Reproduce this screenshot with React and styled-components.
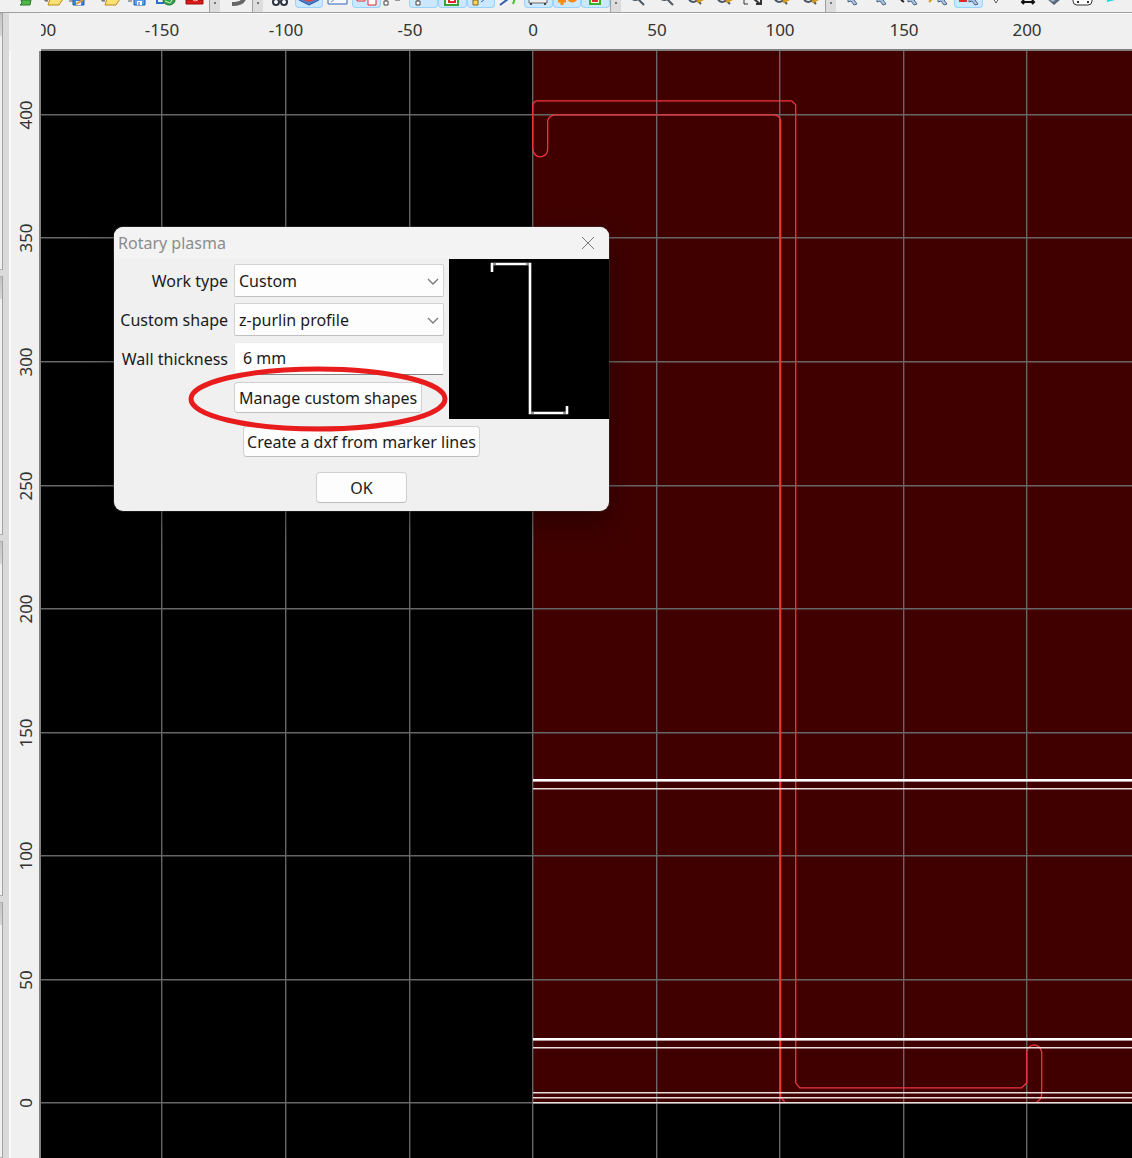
import React from "react";
import styled, { createGlobalStyle } from "styled-components";

const range = (from, to, step) => {
  const out = [];
  for (let v = from; v <= to; v += step) out.push(v);
  return out;
};

// drawing units: 50 mm are 123.5 px on screen
const SCALE = 2.47;
const ORIGIN = { x: 492, y: 1052 };
const X_TICKS = range(-200, 1500, 50);
const Y_TICKS = range(-500, 400, 50);
const toX = (mm) => Math.round(ORIGIN.x + mm * SCALE);
const toY = (mm) => Math.round(ORIGIN.y - mm * SCALE);

const icons = {
  newFile: <path d="M9 0h10l-1 5H8l2-2z" fill="#4cb648" stroke="#2c7a2c" />,
  folder: (
    <>
      <path d="M4 0h4M5 1h3" stroke="#555" />
      <path d="M8 5l2-6h13l-4 6z" fill="#fbe074" stroke="#b98a1c" />
    </>
  ),
  saveEdit: (
    <>
      <path d="M1 1h4" stroke="#555" />
      <path d="M5 0v5h11V0" fill="#3d84e0" stroke="#1f5db4" />
      <path d="M8 5V1h5v4z" fill="#eef" />
      <path d="M8 4l7-4" stroke="#e0982a" strokeWidth="2" />
    </>
  ),
  save: (
    <>
      <path d="M3 1h4" stroke="#555" />
      <path d="M9 0v5h11V0" fill="#5b9cec" stroke="#1f5db4" />
      <path d="M12 5V1h5v4z" fill="#fff" />
      <path d="M14 2v3" stroke="#1f5db4" />
    </>
  ),
  exportFile: (
    <>
      <path d="M4 0v3h7" fill="none" stroke="#2d6bd0" strokeWidth="2" />
      <ellipse cx="16" cy="0" rx="6" ry="5" fill="#36a24a" stroke="#1c6e2c" />
      <path d="M12 1l5 2 2-3" fill="none" stroke="#c9f0c4" />
    </>
  ),
  red: (
    <>
      <path d="M5 0h17v4H5z" fill="#dc1717" stroke="#9d0e0e" />
      <path d="M12 0l2 1 3-1" stroke="#ffb5b5" fill="none" />
    </>
  ),
  curl: <path d="M8 4q10 0 12-5" fill="none" stroke="#666" strokeWidth="4" />,
  binoculars: (
    <>
      <circle cx="10" cy="2" r="3" fill="#fff" stroke="#2b3440" strokeWidth="2" />
      <circle cx="18" cy="2" r="3" fill="#fff" stroke="#2b3440" strokeWidth="2" />
    </>
  ),
  layers: (
    <>
      <path d="M4 0l10 5 10-5" fill="#4f7fca" stroke="#2454a8" />
      <path d="M8 0l6 2 6-2z" fill="#d84a4a" />
    </>
  ),
  rect: (
    <>
      <path d="M4-3h19v7H4z" fill="#f4f8ff" stroke="#3563b8" />
      <path d="M7 2l4-3" stroke="#888" />
    </>
  ),
  squares: (
    <>
      <path d="M5-5h8v6H5z" fill="#fff" stroke="#e02a2a" />
      <path d="M16-3h8v8h-8z" fill="#fff" stroke="#e02a2a" />
    </>
  ),
  nodes: (
    <>
      <path d="M3 1h4v4H3z" fill="#fff" stroke="#444" />
      <path d="M5 0v1M14 0h5" stroke="#444" />
    </>
  ),
  node: (
    <>
      <path d="M6 1h4v4H6z" fill="#fff" stroke="#444" />
      <path d="M8 0v1" stroke="#444" />
    </>
  ),
  nested: (
    <>
      <path d="M7-6h13v11H7z" fill="#fff" stroke="#35a435" strokeWidth="2" />
      <path d="M11-4h6v6h-6z" fill="#fff" stroke="#e02a2a" strokeWidth="2" />
    </>
  ),
  snap: (
    <>
      <path d="M6 0h5v5H6z" fill="#fbd75b" stroke="#7a6420" />
      <path d="M14 2l4-3" stroke="#3563b8" />
    </>
  ),
  lines: (
    <>
      <path d="M4 5l8-6" stroke="#2f5fae" strokeWidth="2" />
      <path d="M17 4l2-6" stroke="#42c02c" strokeWidth="2" />
    </>
  ),
  machine: (
    <>
      <path d="M5 0v3h18V0" fill="#eee" stroke="#666" />
      <path d="M7 3v2M21 3v2" stroke="#444" strokeWidth="2" />
    </>
  ),
  orange: <path d="M5 1h8M9-2v7M15-2q4 6 9 0" fill="none" stroke="#f58a14" strokeWidth="3" />,
  greenSquare: (
    <>
      <path d="M8-6h10v10H8z" fill="#fff" stroke="#36b12c" strokeWidth="2" />
      <path d="M11-3h4v4h-4z" fill="#fff" stroke="#e02a2a" strokeWidth="2" />
    </>
  ),
  zoom: <path d="M8-1q4 2 6 0l6 6" fill="none" stroke="#4b5765" strokeWidth="2" />,
  zoomGold: (
    <>
      <path d="M7 0q5 4 8 0l4 4" fill="none" stroke="#4b5765" strokeWidth="2" />
      <path d="M15 2l6-3" stroke="#d49a1c" strokeWidth="3" />
    </>
  ),
  extents: (
    <>
      <path d="M5 0v4h4" fill="none" stroke="#333" />
      <path d="M15-1l6 5M22 0v4h-5" fill="none" stroke="#333" strokeWidth="2" />
    </>
  ),
  cursor: (
    <path d="M9-3v5l3-1 3 4 3-1-3-4 3-1z" fill="#a9c3e2" stroke="#4b6583" />
  ),
  cursorDot: (
    <>
      <path d="M4 0l3 2" stroke="#222" strokeWidth="2" />
      <path d="M11-3v5l3-1 3 4 3-1-3-4 3-1z" fill="#a9c3e2" stroke="#4b6583" />
    </>
  ),
  cursorGold: (
    <>
      <path d="M4 2l3-3" stroke="#d99a1c" strokeWidth="2" />
      <path d="M13-3v5l3-1 3 4 3-1-3-4 3-1z" fill="#a9c3e2" stroke="#4b6583" />
    </>
  ),
  cursorRed: (
    <>
      <path d="M6-4h6v5H6z" fill="#fff" stroke="#e02a2a" strokeWidth="2" />
      <path d="M15-3v5l3-1 3 4 3-1-3-4 3-1z" fill="#a9c3e2" stroke="#4b6583" />
    </>
  ),
  down: <path d="M10-2l3 5 3-5" fill="#fff" stroke="#555" />,
  width: <path d="M10 2h12M12 0l-2 2 2 2M20 0l2 2-2 2" fill="none" stroke="#111" strokeWidth="2" />,
  solid: (
    <>
      <path d="M7-1l7 6 7-6z" fill="#55677a" />
      <path d="M8-1l5 3 4-3" fill="#9fb2c4" />
    </>
  ),
  track: (
    <>
      <rect x="4" y="-6" width="19" height="11" rx="4" fill="#fff" stroke="#333" />
      <path d="M8 1h2v2H8zM18 1h2v2h-2z" fill="#333" />
    </>
  ),
  flag: <path d="M9-2v4l8-2V-2z" fill="#14d8e0" />,
};

const toolGroups = [
  { width: 197, tools: ["newFile", "folder", "saveEdit", "folder", "save", "exportFile", "red"] },
  { width: 29, tools: ["curl"] },
  {
    width: 344,
    tools: ["binoculars", "layers*", "rect", "squares*", "nodes", "node*", "nested*", "snap*", "lines", "machine*", "orange*", "greenSquare*"],
  },
  { width: 201, tools: ["zoom", "zoom", "zoomGold", "zoomGold", "extents", "zoomGold", "zoomGold"] },
  {
    width: 287,
    tools: ["cursor", "cursor", "cursorDot", "cursorGold", "cursorRed*", "down", "width", "solid", "track", "flag"],
  },
];

function Toolbar() {
  return (
    <ToolbarRow role="toolbar" aria-label="Tools">
      {toolGroups.map((group, i) => (
        <React.Fragment key={i}>
          {i > 0 && <Handle />}
          <ToolGroup $width={group.width}>
            {group.tools.map((tool, j) => {
              const name = tool.replace("*", "");
              return (
                <ToolButton key={j} type="button" aria-label={name} $active={tool.endsWith("*")}>
                  <svg width="28" height="7" viewBox="0 0 28 7">
                    {icons[name]}
                  </svg>
                </ToolButton>
              );
            })}
          </ToolGroup>
        </React.Fragment>
      ))}
    </ToolbarRow>
  );
}

function Drawing() {
  const left = ORIGIN.x;
  return (
    <Plot aria-label="Drawing area">
      <rect x={left} y="0" width="4000" height={ORIGIN.y} fill="#400000" />
      <g stroke="#666" strokeWidth="1.4">
        {X_TICKS.map((mm) => (
          <line key={mm} x1={toX(mm) - 0.3} x2={toX(mm) - 0.3} y1="0" y2="3000" />
        ))}
        {Y_TICKS.map((mm) => (
          <line key={mm} x1="0" x2="4492" y1={toY(mm) - 0.3} y2={toY(mm) - 0.3} />
        ))}
      </g>
      <path
        d="M492 56v42q1 8 8 8q7-1 7-8V70q1-5 7-6H734q5 1 6 6V1047l4 4M996 1051q5-2 5-8V1001q-2-7-8-7q-6 1-7 7V1032l-5 5H759l-4-5V54l-4-4H496q-4 1-4 6"
        fill="none"
        stroke="#f0343c"
        strokeWidth="1.3"
        transform="translate(-0.3 -0.2)"
      />
      <g fill="#fff">
        <rect x={left} y="728" width="4000" height="2.6" />
        <rect x={left} y="987" width="4000" height="2.6" />
      </g>
      <g fill="#e8dcdc">
        {[737, 996, 1041, 1046, 1051].map((y) => (
          <rect key={y} x={left} y={y} width="4000" height="1.5" />
        ))}
      </g>
    </Plot>
  );
}

function RotaryDialog() {
  return (
    <Dialog role="dialog" aria-labelledby="dialog-title">
      <TitleBar>
        <Title id="dialog-title">Rotary plasma</Title>
        <CloseButton type="button" aria-label="Close">
          <svg width="14" height="14" viewBox="0 0 14 14">
            <path d="M1 1l12 12M13 1L1 13" stroke="#777" />
          </svg>
        </CloseButton>
      </TitleBar>
      <DialogBody>
        <Form>
          <Label htmlFor="work-type">Work type</Label>
          <SelectWrap>
            <Select id="work-type" defaultValue="Custom">
              <option>Custom</option>
            </Select>
            <Chevron />
          </SelectWrap>
          <Label htmlFor="custom-shape">Custom shape</Label>
          <SelectWrap>
            <Select id="custom-shape" defaultValue="z-purlin profile">
              <option>z-purlin profile</option>
            </Select>
            <Chevron />
          </SelectWrap>
          <Label htmlFor="wall">Wall thickness</Label>
          <Input id="wall" defaultValue="6 mm" />
          <ManageButton type="button">Manage custom shapes</ManageButton>
        </Form>
        <Preview>
          <svg width="160" height="160" viewBox="0 0 160 160">
            <path d="M43 13V5H81V154H118V147" fill="none" stroke="#fff" strokeWidth="2.6" />
            <path d="M44 5h3M77 5h3M82 154h3M114 154h3" stroke="#333" />
          </svg>
        </Preview>
      </DialogBody>
      <Footer>
        <Button type="button">Create a dxf from marker lines</Button>
        <OkButton type="button">OK</OkButton>
      </Footer>
      <Highlight width="260" height="66" viewBox="0 0 260 66">
        <ellipse cx="130" cy="33" rx="127" ry="30" fill="none" stroke="#e81c1c" strokeWidth="5" />
      </Highlight>
    </Dialog>
  );
}

function Chevron() {
  return (
    <ChevronIcon width="12" height="8" viewBox="0 0 12 8">
      <path d="M1 1l5 5 5-5" fill="none" stroke="#777" strokeWidth="1.3" />
    </ChevronIcon>
  );
}

export default function App() {
  // skip labels that would run past the end of the ruler
  const labels = X_TICKS.filter((mm) => toX(mm) < window.innerWidth - 60);

  return (
    <>
      <GlobalStyle />
      <Window>
        <Toolbar />
        <Main>
          <Dock>
            <DockPanel $size={234} />
            <DockPanel $size={259} />
            <DockPanel $size={355} />
            <DockPanel />
          </Dock>
          <Workspace>
            <Corner />
            <TopRuler>
              {labels.map((mm) => (
                <text key={mm} x={toX(mm)} y="22" textAnchor="middle">
                  {mm}
                </text>
              ))}
            </TopRuler>
            <SideRuler>
              {Y_TICKS.filter((mm) => mm >= 0).map((mm) => (
                <text key={mm} transform={`translate(21 ${toY(mm)}) rotate(-90)`} textAnchor="middle">
                  {mm}
                </text>
              ))}
            </SideRuler>
            <Canvas>
              <Drawing />
              <RotaryDialog />
            </Canvas>
          </Workspace>
        </Main>
      </Window>
    </>
  );
}

const GlobalStyle = createGlobalStyle`
  * {
    box-sizing: border-box;
  }
  body {
    margin: 0;
    background: #f0f0f0;
    color: #1a1a1a;
    font: 16px/24px "Noto Sans", "Open Sans", sans-serif;
  }
  button, input, select {
    font: inherit;
    color: inherit;
  }
`;

const Window = styled.div`
  display: flex;
  flex-direction: column;
  height: 100vh;
  overflow: hidden;
`;

const ToolbarRow = styled.div`
  display: flex;
  flex: none;
  height: 13px;
  padding-left: 12px;
  overflow: hidden;
  border-bottom: 1px solid #a0a0a0;
`;

const ToolGroup = styled.div`
  display: grid;
  flex: none;
  grid-auto-flow: column;
  grid-auto-columns: 1fr;
  width: ${(p) => p.$width}px;
`;

const ToolButton = styled.button`
  display: flex;
  justify-content: center;
  height: 8px;
  padding: 0;
  overflow: hidden;
  border: 1px solid ${(p) => (p.$active ? "#99d1ff" : "transparent")};
  border-top: 0;
  border-radius: 0 0 4px 4px;
  background: ${(p) => (p.$active ? "#cce8ff" : "transparent")};

  svg {
    flex: none;
  }
`;

const Handle = styled.div`
  flex: none;
  width: 14px;
  border-left: 1px solid #a0a0a0;
  border-right: 3px solid #f0f0f0;
  background: radial-gradient(circle at 5px 3px, #777 1px, transparent 1px) 0 0 / 10px 5px no-repeat #dcdcdc;
`;

const Main = styled.div`
  display: flex;
  flex: 1;
  min-height: 0;
`;

const Dock = styled.div`
  display: flex;
  flex: none;
  flex-direction: column;
  gap: 6px;
  width: 9px;
  padding-right: 6px;
  background: #dadada;
`;

const DockPanel = styled.div`
  flex: ${(p) => (p.$size ? `0 0 ${p.$size}px` : "1")};
  border: 1px solid #b0b0b0;
  border-left: 0;
  border-right: 1px solid #a0a2a8;
  background: linear-gradient(#c4c4c4, #d8d8d8 22px, #f0f0f0 22px);

  &:first-child {
    flex-basis: 257px;
  }
`;

const Workspace = styled.div`
  display: grid;
  flex: 1;
  grid-template-rows: 38px minmax(0, 1fr);
  grid-template-columns: 32px minmax(0, 1fr);
`;

const Corner = styled.div`
  background: #f0f0f0;
`;

const Ruler = styled.svg`
  display: block;
  width: 100%;
  height: 100%;
  background: #f0f0f0;
  fill: #333;
  font-size: 17px;
`;

const TopRuler = styled(Ruler)`
  border-top: 1px solid #fff;
  border-bottom: 2px solid #808080;
`;

const SideRuler = styled(Ruler)`
  border-left: 2px solid #fafafa;
  border-right: 2px solid #808080;
`;

const Canvas = styled.main`
  position: relative;
  overflow: hidden;
  background: #000;
`;

const Plot = styled.svg`
  display: block;
  width: 100%;
  height: 100%;
`;

const Dialog = styled.section`
  position: absolute;
  top: 176px;
  left: 73px;
  width: 495px;
  border-radius: 9px;
  background: #f0f0f0;
  box-shadow: 0 12px 28px rgba(0, 0, 0, 0.35), 0 0 0 1px rgba(80, 80, 80, 0.4);
`;

const TitleBar = styled.header`
  display: flex;
  align-items: center;
  justify-content: space-between;
  height: 32px;
  padding: 0 14px 0 4px;
  border-radius: 9px 9px 0 0;
  background: #f3f3f3;
`;

const Title = styled.h1`
  margin: 0;
  color: #8c8c8c;
  font-size: 16px;
  font-weight: 400;
`;

const CloseButton = styled.button`
  display: flex;
  padding: 0;
  border: 0;
  background: none;
`;

const DialogBody = styled.div`
  display: flex;
  justify-content: space-between;
`;

const Form = styled.form`
  display: grid;
  grid-template-columns: 114px 210px;
  grid-auto-rows: 33px;
  gap: 6px;
  padding-top: 5px;
`;

const Label = styled.label`
  align-self: center;
  text-align: right;
  white-space: nowrap;
`;

const SelectWrap = styled.div`
  position: relative;
`;

const Select = styled.select`
  width: 100%;
  height: 33px;
  padding: 0 28px 0 4px;
  appearance: none;
  border: 1px solid #d2d2d2;
  border-bottom-color: #c0c0c0;
  border-radius: 2px;
  background: #fdfdfd;
`;

const ChevronIcon = styled.svg`
  position: absolute;
  top: 14px;
  right: 5px;
  pointer-events: none;
`;

const Input = styled.input`
  width: 100%;
  height: 33px;
  padding: 0 8px 1px;
  border: 1px solid #ececec;
  border-bottom: 1px solid #868686;
  border-radius: 2px;
  background: #fff;
`;

const Button = styled.button`
  height: 31px;
  padding: 0 3px;
  border: 1px solid #d0d0d0;
  border-bottom-color: #bdbdbd;
  border-radius: 4px;
  background: #fdfdfd;
  white-space: nowrap;
`;

const ManageButton = styled(Button)`
  grid-column: 2;
  align-self: center;
  justify-self: start;
  padding: 0 4px;
`;

const OkButton = styled(Button)`
  width: 91px;
`;

const Preview = styled.div`
  width: 160px;
  height: 160px;
  background: #000;

  svg {
    display: block;
  }
`;

const Footer = styled.footer`
  display: flex;
  flex-direction: column;
  align-items: center;
  gap: 15px;
  padding: 7px 0 8px;
`;

const Highlight = styled.svg`
  position: absolute;
  top: 139px;
  left: 74px;
  pointer-events: none;
`;
